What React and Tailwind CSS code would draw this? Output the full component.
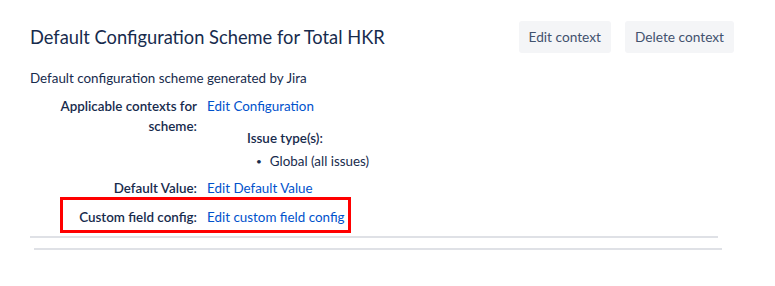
import React from "react";

const Row = ({ label, children }) => (
  <div className="flex items-start">
    <div className="w-[197px] shrink-0 text-right font-semibold text-[#172b4d]">{label}</div>
    <div className="pl-[10px]">{children}</div>
  </div>
);

const App = () => {
  return (
    <div className="w-[775px] h-[286px] bg-white font-['Lato',sans-serif] text-[13.4px] text-[#172b4d]">
      {/* Header */}
      <div className="flex items-center justify-between pl-[30px] pr-[41px] pt-[21px]">
        <h1 className="text-[18.3px] leading-[32px] font-normal">Default Configuration Scheme for Total HKR</h1>
        <div className="flex gap-[14px]">
          <button className="h-[32px] px-[10px] rounded-[3px] bg-[#f4f5f7] text-[13.7px] text-[#42526e]">Edit context</button>
          <button className="h-[32px] px-[10px] rounded-[3px] bg-[#f4f5f7] text-[13.7px] text-[#42526e]">Delete context</button>
        </div>
      </div>

      <p className="pl-[30px] mt-[15px] leading-[20px]">Default configuration scheme generated by Jira</p>

      <div className="mt-[8px] flex flex-col leading-[20px]">
        <Row label={<>Applicable contexts for<br />scheme:</>}>
          <a className="text-[#0052cc]">Edit Configuration</a>
          <div className="pl-[40px] mt-[12px] font-semibold">Issue type(s):</div>
          <ul className="pl-[49px] mt-[3px]">
            <li className="flex items-center gap-[8px]">
              <span className="text-[10px]">•</span>
              <span>Global (all issues)</span>
            </li>
          </ul>
        </Row>
        <div className="mt-[7px]">
          <Row label="Default Value:">
            <a className="text-[#0052cc]">Edit Default Value</a>
          </Row>
        </div>
        <div className="relative mt-[9px]">
          <Row label="Custom field config:">
            <a className="text-[#0052cc]">Edit custom field config</a>
          </Row>
          {/* annotation box */}
          <div className="absolute left-[60px] top-[-10px] w-[291px] h-[36px] border-[3px] border-[#ff0000]" />
        </div>
      </div>

      <div className="mt-[9px] ml-[30px] w-[688px] h-[2px] bg-[#dfe1e6]" />
      <div className="mt-[10px] ml-[34px] w-[688px] h-[2px] bg-[#dfe1e6]" />
    </div>
  );
};

export default App;
